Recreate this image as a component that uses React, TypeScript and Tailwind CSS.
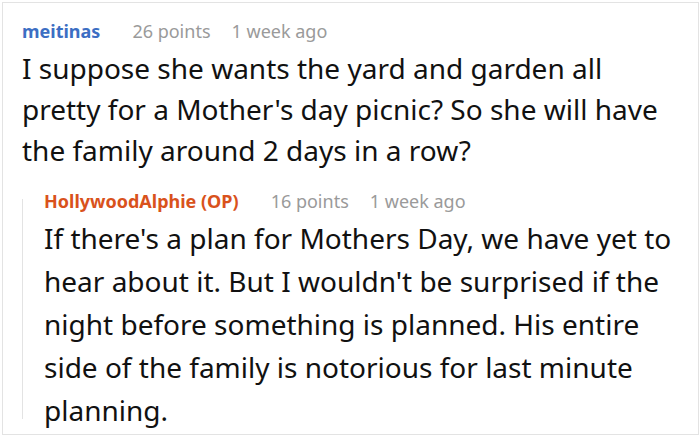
export default function App() {
  return (
    <div className="w-[700px] h-[436px] bg-white p-[2px] font-['Noto_Sans',sans-serif]">
      <div className="h-[433px] w-[697px] border border-[#e3e3e3] pl-[19px] pt-[16px] overflow-hidden">
        <div className="flex items-center h-[24px] text-[18px] leading-[24px] whitespace-nowrap">
          <span className="font-bold text-[#3c6ec3]">meitinas</span>
          <span className="ml-[32px] text-[#9a9a9a]">26 points</span>
          <span className="ml-[21px] text-[#9a9a9a]">1 week ago</span>
        </div>
        <p className="mt-[5px] w-[650px] text-[28px] leading-[41px] text-[#111]">
          I suppose she wants the yard and garden all pretty for a Mother's day picnic? So she will have the family around 2 days in a row?
        </p>
        <div className="flex mt-[18px]">
          <div className="w-px mt-[10px] h-[220px] bg-[#e3e3e3] shrink-0" />
          <div className="pl-[21px]">
            <div className="flex items-center h-[24px] text-[18px] leading-[24px] whitespace-nowrap">
              <span className="font-bold text-[#d9521c]">HollywoodAlphie (OP)</span>
              <span className="ml-[32px] text-[#9a9a9a]">16 points</span>
              <span className="ml-[21px] text-[#9a9a9a]">1 week ago</span>
            </div>
            <p className="mt-[4px] w-[645px] text-[28px] leading-[43px] text-[#111]">
              If there's a plan for Mothers Day, we have yet to hear about it. But I wouldn't be surprised if the night before something is planned. His entire side of the family is notorious for last minute planning.
            </p>
          </div>
        </div>
      </div>
    </div>
  );
}
